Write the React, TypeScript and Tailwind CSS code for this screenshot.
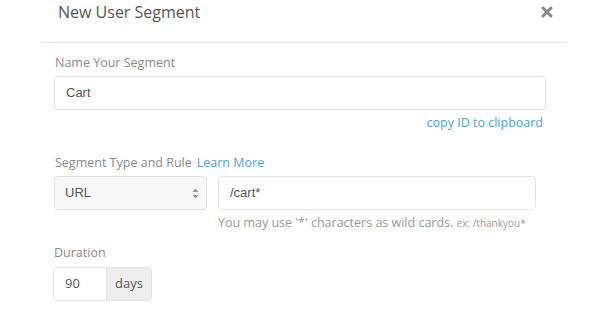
import React from "react";

const App: React.FC = () => {
  return (
    <div className="w-[600px] h-[309px] bg-white overflow-hidden font-['Open_Sans',sans-serif]">
      <div className="ml-[42px] w-[525px]">
        {/* header */}
        <div className="h-[43px] flex items-start justify-between border-b border-[#e5e5e5]">
          <h2 className="pl-4 text-[16px] leading-[24px] text-[#555]">
            New User Segment
          </h2>
          <button className="mt-[5px] mr-[13px] w-[14px] h-[14px] flex items-center justify-center">
            <svg width="12" height="12" viewBox="0 0 12 12">
              <path
                d="M2 2 L10 10 M10 2 L2 10"
                stroke="#888"
                strokeWidth="3"
                strokeLinecap="round"
              />
            </svg>
          </button>
        </div>

        {/* body */}
        <div className="pl-3 pt-[11px]">
          <label className="block pl-[1px] text-[12.5px] leading-[18px] text-[#888]">
            Name Your Segment
          </label>
          <div className="mt-[4px] w-[492px] h-[34px] border border-[#e2e2e2] rounded-[4px] flex items-center px-[11px] text-[13px] text-[#555] font-['Liberation_Sans',sans-serif]">
            Cart
          </div>
          <div className="w-[489px] flex justify-end mt-[4px] text-[12.5px] leading-[17px] text-[#4aa3d8]">
            copy ID to clipboard
          </div>

          <div className="mt-[23px] flex items-center gap-[5px] pl-[1px] text-[12.5px] leading-[18px]">
            <span className="text-[#888]">Segment Type and Rule</span>
            <span className="text-[#4aa3d8]">Learn More</span>
          </div>
          <div className="mt-[4px] flex gap-[11px]">
            <div className="w-[153px] h-[34px] border border-[#e2e2e2] rounded-[4px] bg-[#f8f8f8] flex items-center justify-between pl-[10px] pr-[7px] text-[13px] text-[#555] font-['Liberation_Sans',sans-serif]">
              <span>URL</span>
              <svg width="7" height="11" viewBox="0 0 7 11">
                <path d="M3.5 0.5 L6.5 4 L0.5 4 Z" fill="#999" />
                <path d="M3.5 10.5 L6.5 7 L0.5 7 Z" fill="#999" />
              </svg>
            </div>
            <div>
              <div className="w-[318px] h-[34px] border border-[#e2e2e2] rounded-[4px] flex items-center px-[11px] text-[13px] text-[#555] font-['Liberation_Sans',sans-serif]">
                /cart*
              </div>
              <div className="mt-[4px] text-[12.5px] leading-[18px] text-[#999] whitespace-nowrap">
                You may use '*' characters as wild cards.{" "}
                <span className="text-[10px]">ex: /thankyou*</span>
              </div>
            </div>
          </div>

          <label className="block mt-[12px] text-[12.5px] leading-[18px] text-[#888]">
            Duration
          </label>
          <div className="mt-[5px] flex w-[99px] h-[34px] -ml-[1px] border border-[#e2e2e2] rounded-[4px] overflow-hidden text-[13px] text-[#555]">
            <div className="w-[52px] flex items-center pl-[11px] bg-white">90</div>
            <div className="flex-1 flex items-center justify-center bg-[#eeeeee] border-l border-[#e2e2e2]">
              days
            </div>
          </div>
        </div>
      </div>
    </div>
  );
};

export default App;
